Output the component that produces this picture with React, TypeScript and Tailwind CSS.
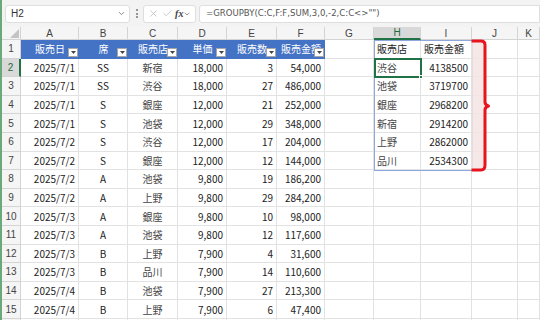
import React from 'react';
import { ChevronDown, X, Check } from 'lucide-react';

const cols = ['A', 'B', 'C', 'D', 'E', 'F', 'G', 'H', 'I', 'J', 'K'];
const heads = ['販売日', '席', '販売店', '単価', '販売数', '販売金額'];

const data: string[][] = [
    ['2025/7/1', 'SS', '新宿', '18,000', '3', '54,000'],
    ['2025/7/1', 'SS', '渋谷', '18,000', '27', '486,000'],
    ['2025/7/1', 'S', '銀座', '12,000', '21', '252,000'],
    ['2025/7/1', 'S', '池袋', '12,000', '29', '348,000'],
    ['2025/7/2', 'S', '渋谷', '12,000', '17', '204,000'],
    ['2025/7/2', 'S', '銀座', '12,000', '12', '144,000'],
    ['2025/7/2', 'A', '池袋', '9,800', '19', '186,200'],
    ['2025/7/2', 'A', '上野', '9,800', '29', '284,200'],
    ['2025/7/3', 'A', '銀座', '9,800', '10', '98,000'],
    ['2025/7/3', 'A', '池袋', '9,800', '12', '117,600'],
    ['2025/7/3', 'B', '上野', '7,900', '4', '31,600'],
    ['2025/7/3', 'B', '品川', '7,900', '14', '110,600'],
    ['2025/7/4', 'B', '池袋', '7,900', '27', '213,300'],
    ['2025/7/4', 'B', '上野', '7,900', '6', '47,400'],
    ['', '', '', '', '', ''],
];

const result: [string, string][] = [
    ['販売店', '販売金額'],
    ['渋谷', '4138500'],
    ['池袋', '3719700'],
    ['銀座', '2968200'],
    ['新宿', '2914200'],
    ['上野', '2862000'],
    ['品川', '2534300'],
];

// alignment per data column A..F
const align = ['justify-end', 'justify-center', 'justify-center', 'justify-end', 'justify-end', 'justify-end'];

const FilterButton = () => (
    <div className="absolute right-[1px] bottom-[1px] w-[10px] h-[9px] bg-white border border-[#a6a6a6] flex items-center justify-center">
        <svg width="5" height="3" viewBox="0 0 5 3">
            <polygon points="0,0 5,0 2.5,3" fill="#444" />
        </svg>
    </div>
);

const cell = 'border-r border-b border-[#e2e2e2] flex items-center px-[3px] overflow-hidden whitespace-nowrap';
const rowHead = 'border-r border-b border-[#d4d4d4] bg-[#f5f5f5] flex items-center justify-center text-[#444] font-["Liberation_Sans",sans-serif] text-[10px]';

export default function App() {
    return (
        <div className="w-[540px] h-[320px] overflow-hidden bg-white border-l-2 border-[#6aa97a] flex flex-col font-['Noto_Sans_CJK_JP',sans-serif] text-[10px] text-[#222]">
            {/* formula bar */}
            <div className="h-[27px] shrink-0 bg-[#f3f3f3] flex items-center">
                <div className="ml-[3px] w-[125px] h-[18px] bg-white border border-[#dedede] rounded-[3px] flex items-center justify-between pl-[5px] pr-[3px]">
                    <span className="text-[10px] text-[#333] font-['Liberation_Sans',sans-serif]">H2</span>
                    <ChevronDown size={9} className="text-[#666]" strokeWidth={2} />
                </div>
                <div className="w-[13px] flex flex-col items-center gap-[1.5px]">
                    <span className="w-[2px] h-[2px] bg-[#777] rounded-full" />
                    <span className="w-[2px] h-[2px] bg-[#777] rounded-full" />
                    <span className="w-[2px] h-[2px] bg-[#777] rounded-full" />
                </div>
                <div className="w-[53px] h-[18px] bg-white border border-[#dedede] rounded-[3px] flex items-center justify-between px-[4px]">
                    <X size={11} className="text-[#b5b5b5]" strokeWidth={1.5} />
                    <Check size={11} className="text-[#b5b5b5]" strokeWidth={1.5} />
                    <span className="italic font-bold text-[10px] text-[#444] font-['Liberation_Serif',serif] leading-none">fx</span>
                    <ChevronDown size={8} className="text-[#666] -ml-[3px]" strokeWidth={2} />
                </div>
                <div className="ml-[3px] flex-1 h-[18px] bg-white border border-[#dedede] rounded-l-[3px] flex items-center pl-[6px]">
                    <span className="text-[9.5px] text-[#555] font-['DejaVu_Sans_Condensed','Liberation_Sans',sans-serif]">=GROUPBY(C:C,F:F,SUM,3,0,-2,C:C&lt;&gt;"")</span>
                </div>
            </div>

            {/* sheet */}
            <div className="relative flex-1 grid grid-cols-[19px_58px_49px_50px_49px_50px_48px_49px_47px_51px_46px_1fr] grid-rows-[13px_repeat(16,18.6px)]">
                {/* column letters */}
                <div className="border-r border-b border-[#d4d4d4] bg-[#f5f5f5] flex items-end justify-end p-[1px]">
                    <svg width="9" height="9" viewBox="0 0 9 9">
                        <polygon points="9,0 9,9 0,9" fill="#c4c4c4" />
                    </svg>
                </div>
                {cols.map((c) =>
                    c === 'H' ? (
                        <div key={c} className="border-r border-[#d4d4d4] border-b-2 border-b-[#217346] bg-[#d9d9d9] flex items-center justify-center text-[#1d6b3a] font-['Liberation_Sans',sans-serif] text-[10px]">
                            {c}
                        </div>
                    ) : (
                        <div key={c} className={rowHead}>
                            {c}
                        </div>
                    )
                )}

                {/* row 1 */}
                <div className={rowHead}>1</div>
                {heads.map((h) => (
                    <div key={h} className="relative bg-[#4472c4] border-b border-[#4472c4] flex items-center justify-center text-white overflow-hidden whitespace-nowrap">
                        {h}
                        <FilterButton />
                    </div>
                ))}
                <div className={cell} />
                <div className={cell}>{result[0][0]}</div>
                <div className={cell}>{result[0][1]}</div>
                <div className={cell} />
                <div className={cell} />

                {/* rows 2..15, plus the sliver of 16 */}
                {data.map((r, i) => {
                    const n = i + 2;
                    const res = result[n - 1];
                    return (
                        <React.Fragment key={n}>
                            {n === 2 ? (
                                <div className="border-b border-[#d4d4d4] border-r-2 border-r-[#217346] bg-[#d9d9d9] flex items-center justify-center text-[#1d6b3a] font-['Liberation_Sans',sans-serif] text-[10px]">
                                    {n}
                                </div>
                            ) : (
                                <div className={rowHead}>{n < 16 ? n : ''}</div>
                            )}
                            {r.map((v, j) => (
                                <div key={j} className={`${cell} ${align[j]} ${j === 2 ? 'text-[#444]' : ''}`}>
                                    {v}
                                </div>
                            ))}
                            <div className={cell} />
                            <div className={`${cell} ${res ? 'text-[#444]' : ''}`}>{res ? res[0] : ''}</div>
                            <div className={`${cell} justify-end`}>{res ? res[1] : ''}</div>
                            <div className={cell} />
                            <div className={cell} />
                        </React.Fragment>
                    );
                })}

                {/* spill range outline H1:I7 */}
                <div className="absolute left-[372px] top-[13px] w-[99px] h-[131px] border border-[#8ea7da] pointer-events-none" />
                {/* active cell H2 */}
                <div className="absolute left-[372px] top-[31px] w-[48px] h-[20px] border-2 border-[#217346] pointer-events-none">
                    <div className="absolute -right-[3px] -bottom-[3px] w-[4px] h-[4px] bg-[#217346] border border-white" />
                </div>
                {/* red bracket */}
                <svg className="absolute left-[468px] top-[12px] pointer-events-none" width="24" height="134" viewBox="0 0 24 134">
                    <rect x="2" y="2" width="12" height="129" fill="#f6e4e4" opacity="0.85" />
                    <path
                        d="M1.5 2 H11 Q15 2 15 6 V63 Q15 66 18.5 67 Q15 68 15 71 V126 Q15 131 11 131 H1.5"
                        fill="none"
                        stroke="#e8141c"
                        strokeWidth="3"
                        strokeLinejoin="round"
                    />
                </svg>
            </div>
        </div>
    );
}
